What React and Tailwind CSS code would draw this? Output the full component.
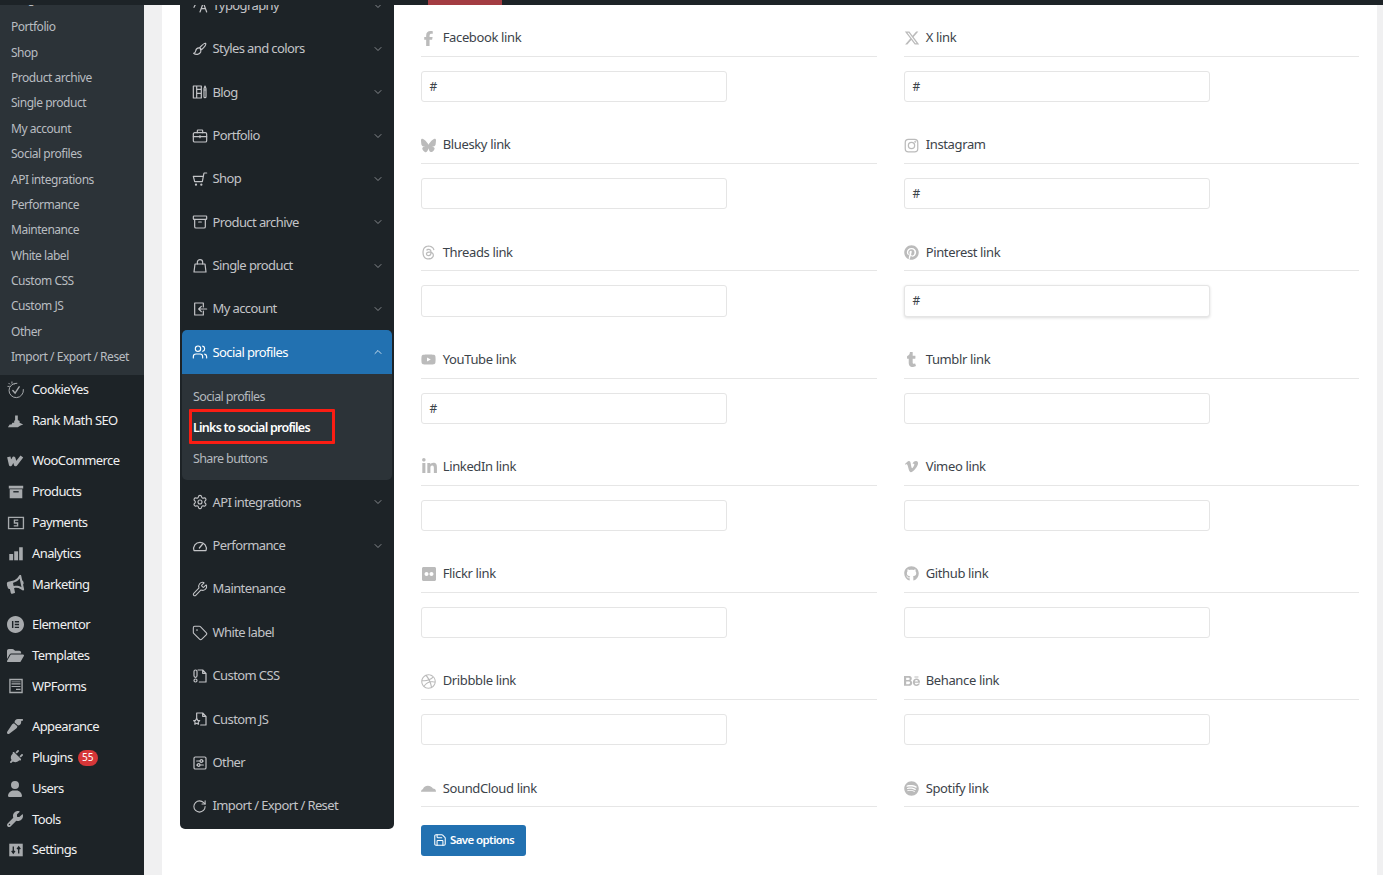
import React from "react";
import { FaFacebookF, FaXTwitter, FaBluesky, FaThreads, FaPinterest, FaYoutube, FaTumblr, FaLinkedinIn, FaVimeoV, FaFlickr, FaGithub, FaDribbble, FaBehance, FaSpotify, FaFolderOpen, FaPaintbrush, FaPlug, FaUser, FaWrench, FaBullhorn } from "react-icons/fa6";
import { SiElementor } from "react-icons/si";
import { ChevronDown, ChevronUp, Archive, Users, Settings, Wrench, Tag, RotateCw, Save } from "lucide-react";

const FONT = "font-['Noto_Sans','Open_Sans',sans-serif]";

const S = ({ children, vb = "0 0 24 24", size = 16, cls = "" }) => (
  <svg viewBox={vb} width={size} height={size} className={cls} fill="none" stroke="currentColor" strokeWidth="1.8" strokeLinecap="round" strokeLinejoin="round">{children}</svg>
);

const BrushIcon = () => <S><path d="M20.500 3.500c-2-1-4 1-9 6.500l3 3c5.500-5 7-7.500 6-9.500z" /><path d="M11.500 10.500C8 10 6 12 5.500 15c-.3 2-1.500 3-3 3.500 3 2.500 9 2 10.500-2 .6-2 .5-3-.5-4.500" /></S>;
const BlogIcon = () => <S><path d="M2 3h12v18H2zM7 3v18M7 8h7M7 14h7" /><path d="M18 7l1.500-4L21 7v12a1.500 1.500 0 0 1-3 0zM18 9h3" /></S>;
const CaseIcon = () => <S><rect x="2" y="7" width="20" height="14" rx="2" /><path d="M8 7V4a1 1 0 0 1 1-1h6a1 1 0 0 1 1 1v3M2 13h20M12 11.500v3" /></S>;
const CartIcon = () => <S><path d="M2 8h15l-1.500 8H4zM17 8l1-5h4" /><circle cx="6" cy="20.500" r=".8" /><circle cx="14" cy="20.500" r=".8" /></S>;
const BagIcon = () => <S><path d="M4.500 9h15l1.500 12H3z" /><path d="M8 9V6.500a4 4 0 0 1 8 0V9" /></S>;
const LoginIcon = () => <S><path d="M17 9V3H4v18h13v-6" /><path d="M22 12H10M14 8l-4 4 4 4" /></S>;
const GaugeIcon = () => <S><path d="M3 19a9.500 9.500 0 1 1 18 0z" /><path d="M11 15l5-6" /></S>;
const CssIcon = () => <S><path d="M9 3h7l5 5v13H11M16 3v5h5" /><rect x="3" y="3" width="4.500" height="11" rx="2.200" /><rect x="3" y="16.500" width="4.500" height="4.500" rx="2.200" /></S>;
const JsIcon = () => <S><path d="M7 10V3h9l5 5v13h-8M16 3v5h5" /><path d="M7 11l1.500 3 3 .4-2.200 2.200.5 3.200L7 18.400l-2.800 1.400.5-3.200L2.500 14.400l3-.4z" /></S>;
const OtherIcon = () => <S><rect x="3" y="3" width="18" height="18" rx="2" /><path d="M7 9h5M16 9h1M7 15h1M12 15h5" /><circle cx="14" cy="9" r="2" /><circle cx="10" cy="15" r="2" /></S>;
const TypoIcon = () => <S><path d="M2 6h5L3 14M12 21l5-14 5 14M14 16h6" /></S>;

const panelTop = [
  ["Typography", TypoIcon],
  ["Styles and colors", BrushIcon],
  ["Blog", BlogIcon],
  ["Portfolio", CaseIcon],
  ["Shop", CartIcon],
  ["Product archive", () => <Archive size={16} strokeWidth={1.8} />],
  ["Single product", BagIcon],
  ["My account", LoginIcon],
];
const panelBottom = [
  ["API integrations", () => <Settings size={16} strokeWidth={1.7} />, true],
  ["Performance", GaugeIcon, true],
  ["Maintenance", () => <Wrench size={16} strokeWidth={1.6} />],
  ["White label", () => <Tag size={16} strokeWidth={1.6} />],
  ["Custom CSS", CssIcon],
  ["Custom JS", JsIcon],
  ["Other", OtherIcon],
  ["Import / Export / Reset", () => <RotateCw size={15} strokeWidth={1.7} />],
];

const subItems = ["Blog", "Portfolio", "Shop", "Product archive", "Single product", "My account", "Social profiles", "API integrations", "Performance", "Maintenance", "White label", "Custom CSS", "Custom JS", "Other", "Import / Export / Reset"];

const D = ({ children }) => <svg viewBox="0 0 20 20" width="18" height="18" fill="currentColor">{children}</svg>;

const CookieIcon = () => (
  <svg viewBox="0 0 20 20" width="18" height="18" fill="none" stroke="currentColor" strokeWidth="1.100" strokeLinecap="round">
    <path d="M11 2.500a8 8 0 1 0 7.200 7" />
    <path d="M6.500 10.500l2.500 3 4.500-7" strokeWidth="1.600" />
    <path d="M2 2.500l1 1M5.500 1v1.500M1 6h1.500M8 3.500h.1" />
  </svg>
);
const RankIcon = () => <D><path d="M1 17l2-3h2l1-2h2V10l1-1V4h3v5l2 1v2l4 2-3 1-3 2z" /></D>;
const WooIcon = () => <svg viewBox="0 0 20 13" width="18" height="12" fill="none" stroke="currentColor" strokeWidth="3.800" strokeLinejoin="round"><path d="M2 2l2 8.500 3.500-7 2 7 7-9" /></svg>;
const ProductsIcon = () => <D><path d="M2 3h16v3H2zM3 7h14v10H3z" /><rect x="7" y="9" width="6" height="1.500" fill="#1d2327" /></D>;
const PayIcon = () => <D><path fillRule="evenodd" d="M1 3h18v14H1zM2.500 4.500v11h15v-11z" /><path d="M7.500 6h5v1.500H9v1.700h3.500V14h-5v-1.500H11v-1.800H7.500z" /></D>;
const BarsIcon = () => <D><rect x="2.500" y="10" width="4.300" height="7" /><rect x="8" y="7" width="4.300" height="10" /><rect x="13.500" y="2.500" width="4" height="14.500" /></D>;
const FormsIcon = () => <D><path fillRule="evenodd" d="M2.500 2h15v16h-15zM4 3.500v13h12v-13z" /><path d="M5 7h10v1.200H5zM5 10h10v1.200H5zM10 13h5v1.500h-5zM5 5h10v.8H5z" /></D>;
const SettingsIcon = () => (
  <D>
    <rect x="2.500" y="3" width="15" height="14" />
    <path d="M7 6v7M5.200 11L7 13.500 8.800 11M13 14V7M11.200 9L13 6.500 14.800 9" fill="none" stroke="#1d2327" strokeWidth="1.500" />
  </D>
);

const F = (I, s = 16, c = "") => () => <I size={s} className={c} />;
const groups = [
  [["CookieYes", CookieIcon], ["Rank Math SEO", RankIcon]],
  [["WooCommerce", WooIcon], ["Products", ProductsIcon], ["Payments", PayIcon], ["Analytics", BarsIcon], ["Marketing", F(FaBullhorn, 17, "-rotate-12")]],
  [["Elementor", F(SiElementor, 17)], ["Templates", F(FaFolderOpen, 17)], ["WPForms", FormsIcon]],
  [["Appearance", F(FaPaintbrush, 17, "rotate-180")], ["Plugins", F(FaPlug, 15, "rotate-45 ml-[1px]"), 55], ["Users", F(FaUser, 16)], ["Tools", F(FaWrench, 16)], ["Settings", SettingsIcon]],
];

const InstaIcon = () => <svg viewBox="0 0 24 24" width="15" height="15" fill="none" stroke="currentColor" strokeWidth="2"><rect x="2" y="2" width="20" height="20" rx="5" /><circle cx="12" cy="12" r="5" /><circle cx="18" cy="6" r=".6" /></svg>;
const CloudIcon = () => <svg viewBox="0 0 24 10" width="15" height="7" fill="currentColor"><path d="M0 10c0-2 1-3.500 3-4 1-3 4-5.500 8-5.500 4 0 7 2.500 8 4.500 3 0 5 2 5 5z" /></svg>;

const links = [
  ["Facebook link", FaFacebookF, "#", 15], ["X link", FaXTwitter, "#", 16],
  ["Bluesky link", FaBluesky, "", 15], ["Instagram", InstaIcon, "#", 15],
  ["Threads link", FaThreads, "", 15], ["Pinterest link", FaPinterest, "#", 15],
  ["YouTube link", FaYoutube, "#", 15], ["Tumblr link", FaTumblr, "", 15],
  ["LinkedIn link", FaLinkedinIn, "", 17], ["Vimeo link", FaVimeoV, "", 15],
  ["Flickr link", FaFlickr, "", 16], ["Github link", FaGithub, "", 15],
  ["Dribbble link", FaDribbble, "", 15], ["Behance link", FaBehance, "", 16],
  ["SoundCloud link", CloudIcon, null, 15], ["Spotify link", FaSpotify, null, 15],
];

function PanelRow({ label, Icon, chevron }) {
  return (
    <div className="h-[43.4px] flex items-center pl-[12px] pr-[10px] text-[#c3c4c7]">
      <span className="w-[20.5px] shrink-0 flex items-center text-[#c3c4c7]"><Icon /></span>
      <span className="flex-1 text-[13px] tracking-[-0.6px]">{label}</span>
      {chevron && <ChevronDown size={12} strokeWidth={1.5} className="text-[#a7aaad]" />}
    </div>
  );
}

export default function App() {
  return (
    <div className={`${FONT} w-[1383px] h-[875px] overflow-hidden bg-white flex flex-col`}>
      <div className="h-[5px] shrink-0 bg-[#1d2327] pl-[428px] relative z-10">
        <div className="w-[74px] h-full bg-[#a33c42]" />
      </div>
      <div className="flex-1 flex min-h-0 overflow-hidden">
        {/* WP sidebar */}
        <aside className="w-[144px] shrink-0 bg-[#1d2327]">
          <div className="bg-[#2c3338] -mt-[15.8px] h-[385.3px]">
            {subItems.map((s, i) => (
              <div key={s} className="h-[25.38px] flex items-center pl-[11px] text-[12px] tracking-[-0.47px] text-[#b9bdc1] whitespace-nowrap">
                <span className={i === 0 ? "relative -top-[3px]" : ""}>{s}</span>
              </div>
            ))}
          </div>
          <div className="flex flex-col gap-[9.7px]">
            {groups.map((g, i) => (
              <div key={i}>
                {g.map(([label, Icon, badge]) => (
                  <div key={label} className="h-[30.8px] flex items-center text-[13px] tracking-[-0.6px] text-[#f0f0f1] whitespace-nowrap">
                    <span className="w-[32px] pl-[7px] shrink-0 flex items-center text-[#a7aaad]"><Icon /></span>
                    <span>{label}</span>
                    {badge && <span className="ml-[5px] w-[20px] h-[16px] rounded-full bg-[#d63638] text-white text-[10px] tracking-normal flex items-center justify-center">{badge}</span>}
                  </div>
                ))}
              </div>
            ))}
          </div>
        </aside>
        <div className="w-[18px] shrink-0 bg-[#f0f0f1]" />
        <div className="w-[18px] shrink-0 bg-white" />

        {/* Options panel */}
        <nav className="w-[214px] shrink-0 h-[845.2px] bg-[#1d2327] rounded-b-[5px] -mt-[21.2px] relative">
          {panelTop.map(([l, I]) => <PanelRow key={l} label={l} Icon={I} chevron />)}
          <div className="mx-[2px] h-[44px] -mt-[0.7px] bg-[#2271b1] rounded-t-[5px] flex items-center pl-[10px] pr-[8px] text-white">
            <span className="w-[20.5px] shrink-0"><Users size={16} strokeWidth={1.7} /></span>
            <span className="flex-1 text-[13px] tracking-[-0.6px]">Social profiles</span>
            <ChevronUp size={12} strokeWidth={1.5} />
          </div>
          <div className="mx-[2px] mb-[0.4px] h-[106px] bg-[#2c3338] rounded-b-[5px] pl-[11px] pt-[8px] flex flex-col text-[12.5px] tracking-[-0.62px]">
            <div className="h-[31px] flex items-center text-[#b4b9be]">Social profiles</div>
            <div className="h-[31px] flex items-center font-semibold text-white tracking-[-0.75px]">Links to social profiles</div>
            <div className="h-[31px] flex items-center text-[#b4b9be]">Share buttons</div>
          </div>
          {panelBottom.map(([l, I, c]) => <PanelRow key={l} label={l} Icon={I} chevron={c} />)}
          <div className="absolute left-[9px] top-[425.2px] w-[146px] h-[35px] border-[3px] border-[#fb1d13] rounded-[1px]" />
        </nav>

        {/* Content */}
        <main className="w-[983px] shrink-0 pl-[27px] pr-[18px] pt-[15px] bg-white">
          <div className="grid grid-cols-[456px_455px] gap-x-[27px]">
            {links.map(([label, Icon, val, sz]) => (
              <div key={label} className={val === null ? "h-[37px]" : "h-[107.2px]"}>
                <div className="h-[37px] border-b border-[#e6e6e6] flex items-center text-[13px] tracking-[-0.36px] text-[#3c434a]">
                  <span className="w-[21.7px] shrink-0 flex items-center justify-start text-[#bbbbbb]"><Icon size={sz} /></span>
                  <span>{label}</span>
                </div>
                {val !== null && (
                  <div className={`mt-[14px] w-[306px] h-[31.2px] rounded-[3px] border border-[#e5e5e5] bg-white flex items-center pl-[7.5px] pt-px text-[12px] text-[#3c434a] ${label.startsWith("Pinterest") ? "shadow-[0_1px_3px_rgba(0,0,0,0.14)]" : ""}`}>{val}</div>
                )}
              </div>
            ))}
          </div>
          <div className="mt-[17.5px] w-[105px] h-[31px] pb-px rounded-[3px] bg-[#2271b1] text-white text-[11.5px] font-semibold tracking-[-0.6px] flex items-center justify-center gap-[3px]">
            <Save size={14} strokeWidth={1.8} />
            <span>Save options</span>
          </div>
        </main>
        <div className="flex-1 bg-[#f0f0f1]" />
      </div>
    </div>
  );
}
